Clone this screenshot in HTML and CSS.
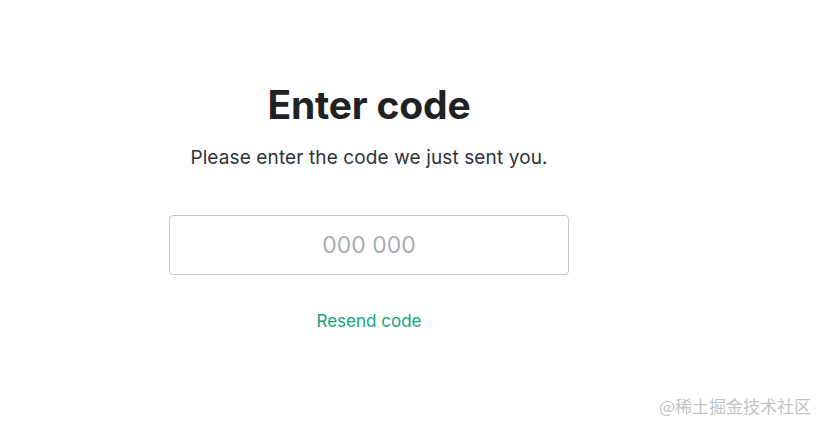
FILE: index.html
```html
<!DOCTYPE html>
<html lang="en">
<head>
    <meta charset="UTF-8">
    <meta name="viewport" content="width=device-width, initial-scale=1.0">
    <title>Enter code</title>
    <link rel="stylesheet" href="styles.css">
</head>
<body>
    <div class="page">
        <div class="container">
            <h1>Enter code</h1>
            <p class="subtitle">Please enter the code we just sent you.</p>

            <form class="code-form">
                <input type="text" class="code-input" placeholder="000 000" inputmode="numeric">
            </form>

            <a href="#" class="resend-link">Resend code</a>
        </div>

        <div class="watermark">@稀土掘金技术社区</div>
    </div>
</body>
</html>
```

FILE: styles.css
```css
* {
    margin: 0;
    padding: 0;
    box-sizing: border-box;
    font-family: 'Inter', 'Noto Sans', sans-serif;
}

body {
    background: #fff;
    width: 825px;
    height: 434px;
    overflow: hidden;
}

.page {
    position: relative;
    height: 100%;
}

.container {
    width: 400px;
    margin-left: 169px;
    padding-top: 82px;
    display: flex;
    flex-direction: column;
    align-items: center;
}

h1 {
    font-size: 39px;
    font-weight: 700;
    color: #202123;
    line-height: 46px;
    letter-spacing: -0.2px;
}

.subtitle {
    margin-top: 17px;
    font-size: 19px;
    color: #2d333a;
    line-height: 26px;
    letter-spacing: 0.12px;
}

.code-form {
    width: 100%;
    margin-top: 44px;
}

.code-input {
    width: 100%;
    height: 60px;
    border: 1px solid #c2c8d0;
    border-radius: 4px;
    text-align: center;
    font-size: 23px;
    color: #2d333a;
    outline: none;
}

.code-input::placeholder {
    color: #a9adb3;
}

.resend-link {
    margin-top: 36px;
    font-size: 17px;
    color: #10a37f;
    text-decoration: none;
}

.watermark {
    position: absolute;
    right: 14px;
    bottom: 16px;
    font-size: 17px;
    color: #c4c4c4;
    font-family: 'Noto Sans CJK SC', sans-serif;
}
```
